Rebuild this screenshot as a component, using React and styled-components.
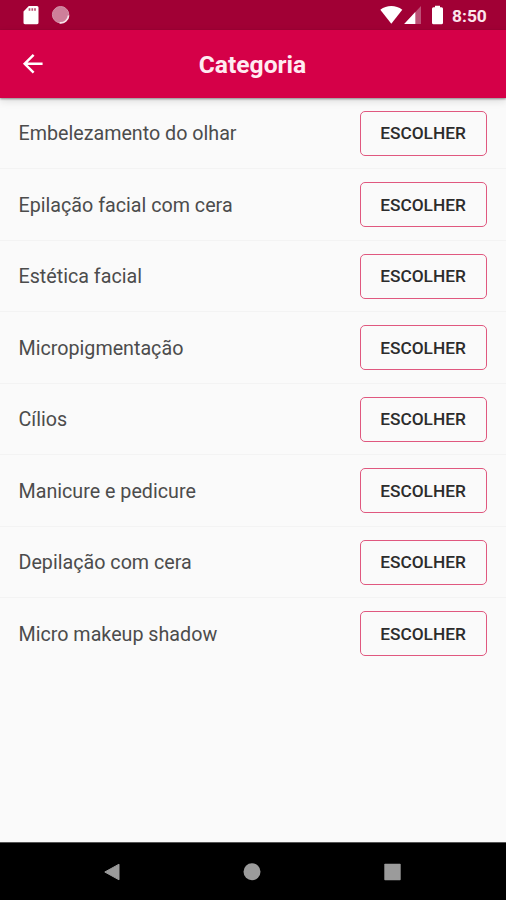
import React from 'react'
import styled, {createGlobalStyle} from 'styled-components'

const GlobalStyle = createGlobalStyle`
    * {
        box-sizing: border-box;
    }
    body {
        margin: 0;
        font-family: Roboto, "Liberation Sans", sans-serif;
        background-color: #fafafa;
    }
`
const Screen = styled.div`
    display: flex;
    flex-direction: column;
    width: 506px;
    height: 900px;
    overflow: hidden;
    background-color: #fafafa;
`
const StatusBar = styled.div`
    display: flex;
    flex-shrink: 0;
    justify-content: space-between;
    height: 29.5px;
    padding: 0 19px 0 22px;
    background-color: #a10035;
`
const StatusGroup = styled.div`
    display: flex;
    align-items: center;
    height: 30px;
`
const StatusIcon = styled.svg`
    display: block;
    margin-right: ${props => props.$gap || '0'};
`
const Clock = styled.span`
    width: 35px;
    padding-top: 1px;
    color: #fbe6ed;
    font-size: 17.4px;
    font-weight: 700;
    line-height: 30px;
    white-space: nowrap;
`
const AppBar = styled.header`
    display: grid;
    grid-template-columns: 47px 1fr 48px;
    flex-shrink: 0;
    align-items: center;
    height: 68px;
    z-index: 1;
    background-color: #d50048;
    box-shadow: 0 1px 2px rgba(0,0,0,.4), 0 3px 8px rgba(0,0,0,.12);
`
const BackButton = styled.button`
    display: flex;
    justify-content: flex-end;
    padding: 0;
    border: none;
    background: none;
`
const Title = styled.h1`
    margin: 2px 0 0;
    color: #ffebf1;
    font-size: 24.6px;
    font-weight: 700;
    text-align: center;
`
const List = styled.ul`
    flex: 1;
    margin: 0;
    padding: 0;
    list-style: none;
`
const Row = styled.li`
    display: flex;
    align-items: center;
    justify-content: space-between;
    height: 71.5px;
    padding: 1px 19px 0 18.5px;
    border-bottom: 1px solid ${props => props.$last ? 'transparent' : '#f3f3f3'};
`
const RowName = styled.span`
    padding-top: 1px;
    color: #4c4c4c;
    font-size: 19.7px;
`
const ChooseButton = styled.button`
    width: 127px;
    height: 45px;
    padding: 0 1px 0 0;
    border: 1.5px solid #e0587f;
    border-radius: 5px;
    color: #2c2c2c;
    background: none;
    font-family: inherit;
    font-size: 17.3px;
    font-weight: 500;
`
const NavBar = styled.nav`
    display: flex;
    flex-shrink: 0;
    align-items: center;
    justify-content: space-between;
    height: 58px;
    padding: 1px 105px 0 103px;
    border-top: 1px solid #555;
    background-color: #000;
`

const categories = [
    'Embelezamento do olhar',
    'Epilação facial com cera',
    'Estética facial',
    'Micropigmentação',
    'Cílios',
    'Manicure e pedicure',
    'Depilação com cera',
    'Micro makeup shadow',
]

function Status(){
    return (
        <StatusBar>
            <StatusGroup>
                <StatusIcon width="18" height="20" viewBox="0 0 18 20" $gap="11px">
                    <path d="M6.8 1H15a1.5 1.5 0 0 1 1.5 1.5v15A1.5 1.5 0 0 1 15 19.2H3A1.5 1.5 0 0 1 1.5 17.5V6.5z" fill="#fff" />
                    <path d="M7.5 3.2v2.5M10.3 3.2v2.5M13 3.2v2.5" stroke="#a10035" strokeOpacity=".7" strokeWidth="1.7" />
                </StatusIcon>
                <StatusIcon width="20" height="20" viewBox="0 0 20 20">
                    <circle cx="9.6" cy="9.7" r="8.2" fill="#ce7f9a" stroke="#d592a9" />
                    <path d="M17.6 10.5a8 8 0 0 1-9 7.3" fill="none" stroke="#f8e4ea" strokeWidth="1.7" />
                </StatusIcon>
            </StatusGroup>
            <StatusGroup>
                <StatusIcon width="24" height="20" viewBox="0 0 24 20" $gap="1px">
                    <path d="M1.3 4.7C4.7 2 8.2.9 12.3.9S19.9 2 23.3 4.7L12.3 18.7z" fill="#fff" />
                </StatusIcon>
                <StatusIcon width="18" height="20" viewBox="0 0 18 20" $gap="9px">
                    <path d="M17 1v18H.2z" fill="#bd5076" />
                    <path d="M11.3 7.1V19H.2z" fill="#fff" />
                </StatusIcon>
                <StatusIcon width="14" height="20" viewBox="0 0 14 20" $gap="7px">
                    <path d="M4 .7h5v1.6h1.5a1.5 1.5 0 0 1 1.5 1.5v14a1.5 1.5 0 0 1-1.5 1.5h-8a1.5 1.5 0 0 1-1.5-1.5v-14a1.5 1.5 0 0 1 1.5-1.5H4z" fill="#fff" />
                </StatusIcon>
                <Clock>8:50</Clock>
            </StatusGroup>
        </StatusBar>
    )
}

function CategoryRow(props){
    const {name, last} = props

    return (
        <Row $last={last}>
            <RowName>{name}</RowName>
            <ChooseButton>ESCOLHER</ChooseButton>
        </Row>
    )
}

function App(){
    return (
        <Screen>
            <GlobalStyle />
            <Status />
            <AppBar>
                <BackButton>
                    <svg width="29.5" height="29.5" viewBox="0 0 24 24">
                        <path d="M20 11H7.83l5.59-5.59L12 4l-8 8 8 8 1.41-1.41L7.83 13H20v-2z" fill="#fff" />
                    </svg>
                </BackButton>
                <Title>Categoria</Title>
            </AppBar>
            <List>
                {categories.map((name, index) => (
                    <CategoryRow key={name} name={name} last={index === categories.length - 1} />
                ))}
            </List>
            <NavBar>
                <svg width="17" height="18" viewBox="0 0 17 18">
                    <path d="M1.8 9 16 1.2v15.6z" fill="#9b9b9b" stroke="#9b9b9b" strokeLinejoin="round" />
                </svg>
                <svg width="18" height="18" viewBox="0 0 18 18">
                    <circle cx="9" cy="8.8" r="8.5" fill="#9b9b9b" />
                </svg>
                <svg width="17" height="18" viewBox="0 0 17 18">
                    <rect x=".3" y=".8" width="16.4" height="16.4" rx=".8" fill="#9b9b9b" />
                </svg>
            </NavBar>
        </Screen>
    )
}

export default App
